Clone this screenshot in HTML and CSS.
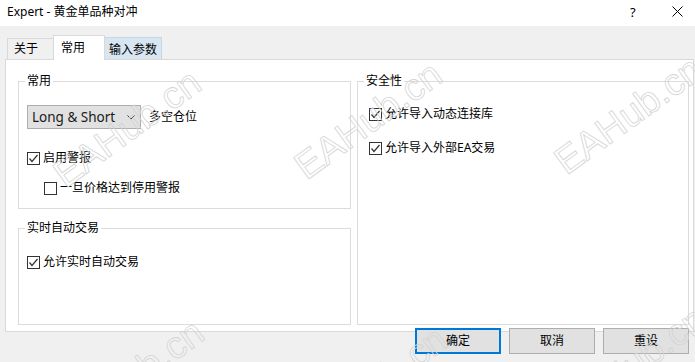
FILE: index.html
```html
<!DOCTYPE html>
<html lang="zh-CN">
<head>
    <meta charset="UTF-8">
    <meta name="viewport" content="width=device-width, initial-scale=1.0">
    <title>Expert - 黄金单品种对冲</title>
    <link rel="stylesheet" href="styles.css">
</head>
<body>
    <div class="window">
        <div class="titlebar">
            <span class="title">Expert - 黄金单品种对冲</span>
            <span class="help">?</span>
            <span class="close">
                <svg width="11" height="11" viewBox="0 0 11 11"><path d="M0.5 0.5 L10.5 10.5 M10.5 0.5 L0.5 10.5" stroke="#000" stroke-width="1" fill="none"/></svg>
            </span>
        </div>

        <div class="tabs">
            <div class="tab tab-about">关于</div>
            <div class="tab tab-active">常用</div>
            <div class="tab tab-hover">输入参数</div>
        </div>

        <div class="panel">
            <div class="column">
                <fieldset class="group group-common">
                    <legend>常用</legend>
                    <div class="select-row">
                        <div class="select">
                            <span>Long &amp; Short</span>
                            <svg width="8" height="5" viewBox="0 0 8 5"><path d="M0.5 0.5 L4 4 L7.5 0.5" stroke="#333" stroke-width="1" fill="none"/></svg>
                        </div>
                        <span>多空仓位</span>
                    </div>
                    <div class="check check-alert">
                        <svg class="box" width="13" height="13" viewBox="0 0 13 13"><rect x="0.5" y="0.5" width="12" height="12" fill="#fff" stroke="#333"/><path d="M2.5 6.5 L5 9.5 L10.5 3" stroke="#333" stroke-width="1.2" fill="none"/></svg>
                        <span>启用警报</span>
                    </div>
                    <div class="check check-sub">
                        <svg class="box" width="13" height="13" viewBox="0 0 13 13"><rect x="0.5" y="0.5" width="12" height="12" fill="#fff" stroke="#333"/></svg>
                        <span>一旦价格达到停用警报</span>
                    </div>
                </fieldset>

                <fieldset class="group group-live">
                    <legend>实时自动交易</legend>
                    <div class="check check-live">
                        <svg class="box" width="13" height="13" viewBox="0 0 13 13"><rect x="0.5" y="0.5" width="12" height="12" fill="#fff" stroke="#333"/><path d="M2.5 6.5 L5 9.5 L10.5 3" stroke="#333" stroke-width="1.2" fill="none"/></svg>
                        <span>允许实时自动交易</span>
                    </div>
                </fieldset>
            </div>

            <fieldset class="group group-safety">
                <legend>安全性</legend>
                <div class="check check-dll">
                    <svg class="box" width="13" height="13" viewBox="0 0 13 13"><rect x="0.5" y="0.5" width="12" height="12" fill="#fff" stroke="#333"/><path d="M2.5 6.5 L5 9.5 L10.5 3" stroke="#333" stroke-width="1.2" fill="none"/></svg>
                    <span>允许导入动态连接库</span>
                </div>
                <div class="check check-ea">
                    <svg class="box" width="13" height="13" viewBox="0 0 13 13"><rect x="0.5" y="0.5" width="12" height="12" fill="#fff" stroke="#333"/><path d="M2.5 6.5 L5 9.5 L10.5 3" stroke="#333" stroke-width="1.2" fill="none"/></svg>
                    <span>允许导入外部EA交易</span>
                </div>
            </fieldset>
        </div>

        <div class="buttons">
            <div class="button button-default">确定</div>
            <div class="button">取消</div>
            <div class="button">重设</div>
        </div>

        <div class="watermarks">
            <span class="mark mark-1">EAHub.cn</span>
            <span class="mark mark-2">EAHub.cn</span>
            <span class="mark mark-3">EAHub.cn</span>
            <span class="mark mark-4">EAHub.cn</span>
            <span class="mark mark-5">EAHub.cn</span>
            <span class="mark mark-6">EAHub.cn</span>
        </div>
    </div>
</body>
</html>
```

FILE: styles.css
```css
body {
    margin: 0;
    background-color: #f0f0f0;
    font-family: "Noto Sans", "Noto Sans CJK SC", sans-serif;
    font-size: 12px;
    line-height: 16px;
    color: #000000;
}
.window {
    position: relative;
    width: 695px;
    height: 362px;
    overflow: hidden;
}

/* title bar */
.titlebar {
    display: flex;
    align-items: center;
    height: 26px;
    background-color: #ffffff;
    padding-left: 7px;
}
.title {
    flex: 1;
    margin-top: -2px;
}
.help {
    width: 42px;
    font-size: 13px;
    margin-top: -2px;
}
.close {
    width: 23px;
    display: flex;
    margin-top: -3px;
}

/* tabs */
.tabs {
    display: flex;
    align-items: flex-end;
    height: 33px;
    padding-left: 7px;
}
.tab {
    display: flex;
    align-items: center;
    box-sizing: border-box;
    border: 1px solid #d9d9d9;
    border-bottom: none;
    background-color: #f0f0f0;
}
.tab-about {
    width: 46px;
    height: 21px;
    padding-left: 6px;
    border-right: none;
}
.tab-active {
    position: relative;
    z-index: 1;
    width: 52px;
    height: 25px;
    margin-bottom: -1px;
    padding-left: 7px;
    padding-bottom: 1px;
    background-color: #ffffff;
}
.tab-hover {
    width: 57px;
    height: 22px;
    padding-left: 4px;
    padding-top: 2px;
    border-left: none;
    background-color: #d8e6f2;
    border-color: #c4d8ea;
}

/* panel */
.panel {
    display: grid;
    grid-template-columns: 333px 332px;
    column-gap: 6px;
    box-sizing: border-box;
    width: 689px;
    height: 273px;
    margin-left: 5px;
    padding: 13px 0 6px 12px;
    background-color: #ffffff;
    border: 1px solid #d9d9d9;
}
.column {
    display: flex;
    flex-direction: column;
    gap: 11px;
}
.group {
    box-sizing: border-box;
    margin: 0;
    padding: 0 8px;
    min-width: 0;
    border: 1px solid #dcdcdc;
}
.group legend {
    padding: 0 2px;
    margin-left: -2px;
    line-height: 16px;
}
.group-common {
    height: 136px;
}
.group-live {
    height: 105px;
}
.group-safety {
    padding-left: 11px;
}
.group-safety legend {
    margin-left: -5px;
}

/* controls */
.select-row {
    display: flex;
    align-items: center;
    gap: 8px;
    margin-top: 16px;
}
.select {
    display: flex;
    align-items: center;
    justify-content: space-between;
    box-sizing: border-box;
    width: 114px;
    height: 24px;
    padding: 0 5px 0 4px;
    background-color: #e1e1e1;
    border: 1px solid #adadad;
    font-size: 13.5px;
    color: #1a1a1a;
}
.check {
    display: flex;
    align-items: center;
    gap: 3px;
    height: 16px;
}
.box {
    flex: none;
}
.check-alert {
    margin-top: 21px;
}
.check-sub {
    margin-top: 14px;
    margin-left: 17px;
}
.check-live {
    margin-top: 18px;
}
.check-dll {
    margin-top: 17px;
}
.check-ea {
    margin-top: 18px;
}

/* buttons */
.buttons {
    display: flex;
    justify-content: flex-end;
    gap: 8px;
    margin-top: -4px;
    padding-right: 6px;
}
.button {
    position: relative;
    display: flex;
    align-items: center;
    justify-content: center;
    box-sizing: border-box;
    width: 86px;
    height: 26px;
    background-color: #e1e1e1;
    border: 1px solid #adadad;
}
.button-default {
    border: 2px solid #0078d7;
}

/* watermark */
.watermarks {
    position: absolute;
    inset: 0;
    pointer-events: none;
}
.mark {
    position: absolute;
    font-family: "Liberation Sans", Arial, sans-serif;
    font-size: 38px;
    line-height: 40px;
    color: transparent;
    -webkit-text-stroke: 0.8px #d4d4d4;
    white-space: nowrap;
    transform: translate(-50%, -50%) rotate(-36deg);
}
.mark-1 { left: 127px; top: 128px; }
.mark-2 { left: 368px; top: 120px; }
.mark-3 { left: 628px; top: 115px; }
.mark-4 { left: 130px; top: 378px; }
.mark-5 { left: 373px; top: 385px; }
.mark-6 { left: 632px; top: 365px; }
```
